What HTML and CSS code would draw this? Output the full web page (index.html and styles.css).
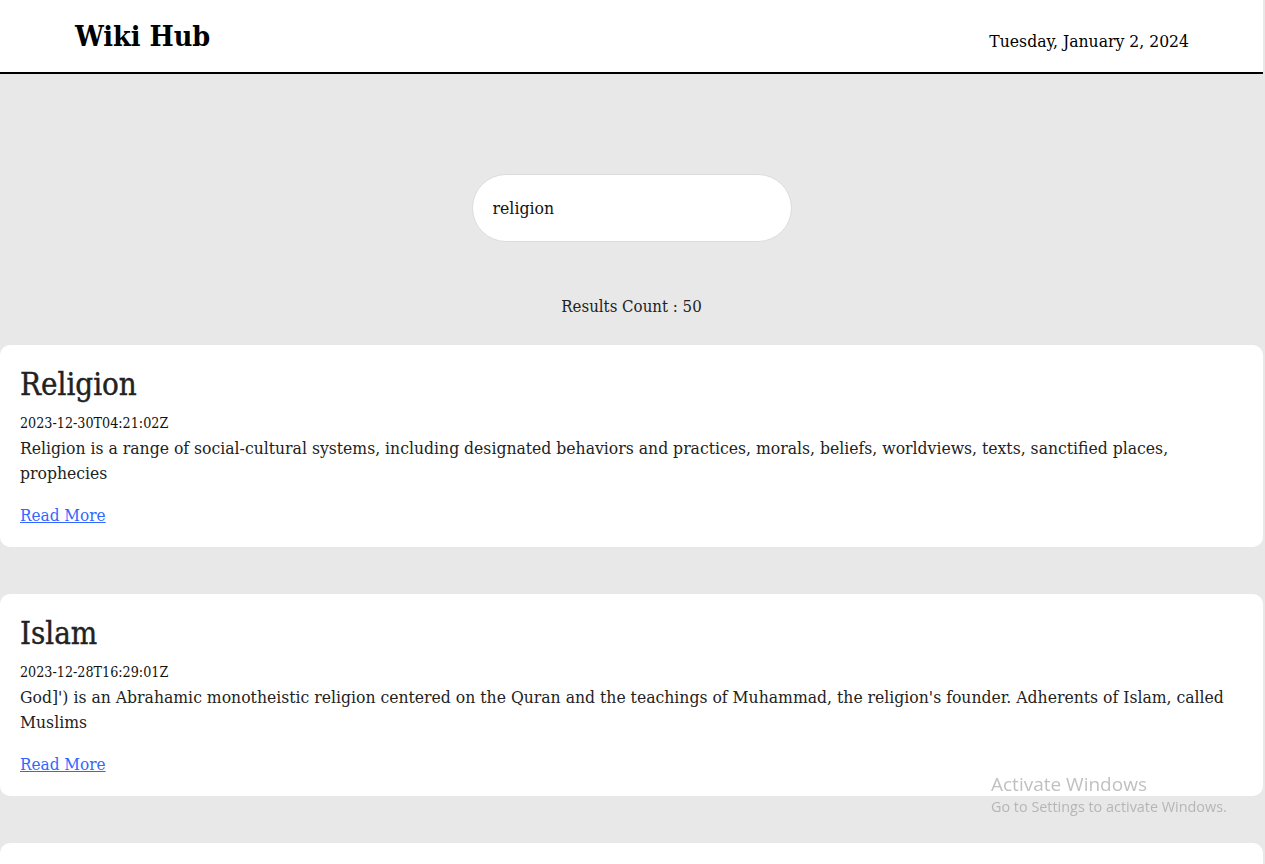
FILE: index.html
```html
<!DOCTYPE html>
<html lang="en">
<head>
<meta charset="utf-8">
<title>Wiki Hub</title>
<link rel="stylesheet" href="styles.css">
</head>
<body>
<header class="topbar">
  <h1 class="brand">Wiki Hub</h1>
  <div class="today">Tuesday, January 2, 2024</div>
</header>
<main class="content">
  <div class="search-wrap">
    <input class="search" type="text" value="religion">
  </div>
  <p class="count">Results Count : 50</p>
  <section class="results">
    <article class="card">
      <h2 class="card-title">Religion</h2>
      <div class="card-date">2023-12-30T04:21:02Z</div>
      <p class="card-text">Religion is a range of social-cultural systems, including designated behaviors and practices, morals, beliefs, worldviews, texts, sanctified places, prophecies</p>
      <a class="card-link" href="#">Read More</a>
    </article>
    <article class="card">
      <h2 class="card-title">Islam</h2>
      <div class="card-date">2023-12-28T16:29:01Z</div>
      <p class="card-text">God]') is an Abrahamic monotheistic religion centered on the Quran and the teachings of Muhammad, the religion's founder. Adherents of Islam, called Muslims</p>
      <a class="card-link" href="#">Read More</a>
    </article>
    <article class="card"></article>
  </section>
</main>
<div class="watermark">
  <div class="wm-title">Activate Windows</div>
  <div class="wm-sub">Go to Settings to activate Windows.</div>
</div>
</body>
</html>
```

FILE: styles.css
```css
html, body {
  margin: 0;
  padding: 0;
}
body {
  width: 1263px;
  background: #e8e8e8;
  font-family: "DejaVu Serif Condensed", "DejaVu Serif", serif;
  color: #222;
  overflow: hidden;
  height: 864px;
}
.topbar {
  background: #fff;
  height: 72px;
  border-bottom: 2px solid #000;
  display: flex;
  align-items: center;
  justify-content: space-between;
  padding: 0 74px 0 75px;
}
.brand {
  margin: 0;
  font-size: 28.5px;
  font-weight: 700;
  color: #000;
}
.today {
  font-size: 17.4px;
  color: #000;
  position: relative;
  top: 5px;
}
.content {
  padding-top: 100px;
}
.search-wrap {
  display: flex;
  justify-content: center;
}
.search {
  width: 320px;
  height: 68px;
  box-sizing: border-box;
  border: 1px solid #dcdcdc;
  border-radius: 34px;
  background: #fff;
  padding: 0 20px;
  font-family: inherit;
  font-size: 17.5px;
  color: #111;
  outline: none;
}
.count {
  text-align: center;
  margin: 54px 0 0;
  font-size: 16.7px;
  line-height: 20px;
  color: #222;
}
.results {
  margin-top: 29px;
  display: flex;
  flex-direction: column;
  gap: 47px;
}
.card {
  background: #fff;
  border-radius: 10px;
  padding: 20px 20px 22px;
  height: 202px;
  box-sizing: border-box;
}
.card-title {
  margin: 0;
  font-size: 31px;
  font-weight: 400;
  -webkit-text-stroke: 0.4px #222;
  line-height: 38px;
  color: #222;
}
.card-date {
  margin-top: 11px;
  font-size: 14.2px;
  line-height: 18px;
  color: #111;
}
.card-text {
  margin: 4px 0 0;
  font-size: 17.4px;
  line-height: 25px;
  color: #222;
}
.card-link {
  display: inline-block;
  margin-top: 18px;
  font-size: 17px;
  line-height: 22px;
  color: #3366ff;
}
.watermark {
  position: fixed;
  left: 991px;
  top: 772px;
  font-family: "Open Sans", "Noto Sans", sans-serif;
  color: rgba(140, 140, 140, 0.55);
}
.wm-title {
  font-size: 19px;
  line-height: 24px;
}
.wm-sub {
  font-size: 14.4px;
  line-height: 22px;
}
```
